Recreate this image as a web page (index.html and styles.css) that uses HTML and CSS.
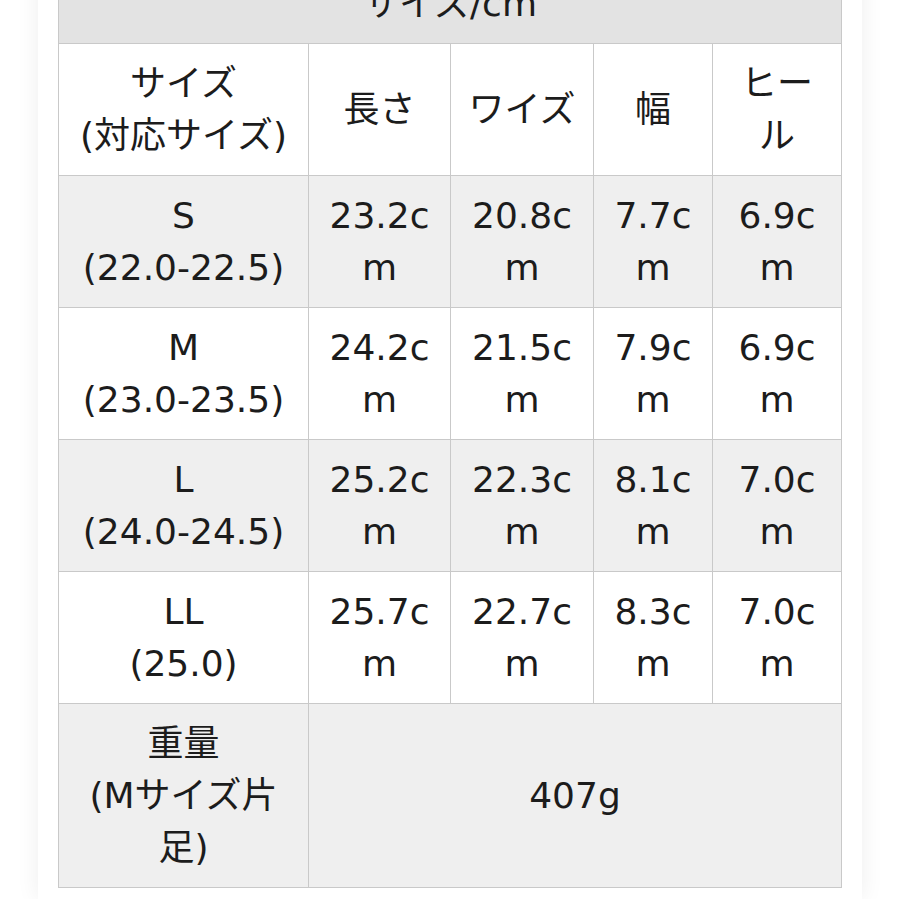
FILE: index.html
```html
<!DOCTYPE html>
<html lang="ja">
<head>
<meta charset="utf-8">
<title>サイズ表</title>
<link rel="stylesheet" href="styles.css">
</head>
<body>
<div class="card">
  <table class="size-table">
    <colgroup>
      <col class="c1"><col class="c2"><col class="c3"><col class="c4"><col class="c5">
    </colgroup>
    <thead>
      <tr class="title-row"><th colspan="5">サイズ/cm</th></tr>
      <tr class="head-row">
        <th>サイズ<br>(対応サイズ)</th>
        <th>長さ</th>
        <th>ワイズ</th>
        <th>幅</th>
        <th>ヒール</th>
      </tr>
    </thead>
    <tbody>
      <tr class="shade">
        <td>S<br>(22.0-22.5)</td><td>23.2cm</td><td>20.8cm</td><td>7.7cm</td><td>6.9cm</td>
      </tr>
      <tr>
        <td>M<br>(23.0-23.5)</td><td>24.2cm</td><td>21.5cm</td><td>7.9cm</td><td>6.9cm</td>
      </tr>
      <tr class="shade">
        <td>L<br>(24.0-24.5)</td><td>25.2cm</td><td>22.3cm</td><td>8.1cm</td><td>7.0cm</td>
      </tr>
      <tr>
        <td>LL<br>(25.0)</td><td>25.7cm</td><td>22.7cm</td><td>8.3cm</td><td>7.0cm</td>
      </tr>
      <tr class="shade">
        <td>重量<br>(Mサイズ片足)</td><td colspan="4">407g</td>
      </tr>
    </tbody>
  </table>
</div>
</body>
</html>
```

FILE: styles.css
```css
html, body {
  margin: 0;
  padding: 0;
  background: #ffffff;
}

body {
  font-family: "DejaVu Sans", "Noto Sans CJK JP", sans-serif;
  color: #1c1c1c;
  overflow: hidden;
}

.card {
  margin: -59px 38px 0;
  padding: 22px 20px 11px;
  background: #ffffff;
  box-shadow: 0 0 22px rgba(0, 0, 0, 0.07);
}

.size-table {
  width: 783px;
  table-layout: fixed;
  border-collapse: collapse;
  border: 1px solid #c9c9c9;
  font-size: 36px;
  line-height: 52px;
}

.c1 { width: 250px; }
.c2 { width: 142px; }
.c3 { width: 143px; }
.c4 { width: 119px; }
.c5 { width: 129px; }

.size-table th,
.size-table td {
  border: 1px solid #c9c9c9;
  padding: 14px 12px 13px;
  text-align: center;
  vertical-align: middle;
  font-weight: normal;
  word-break: break-all;
}

.title-row th {
  background: #e3e3e3;
}

.head-row th {
  background: #ffffff;
}

.shade td {
  background: #efefef;
}
```
